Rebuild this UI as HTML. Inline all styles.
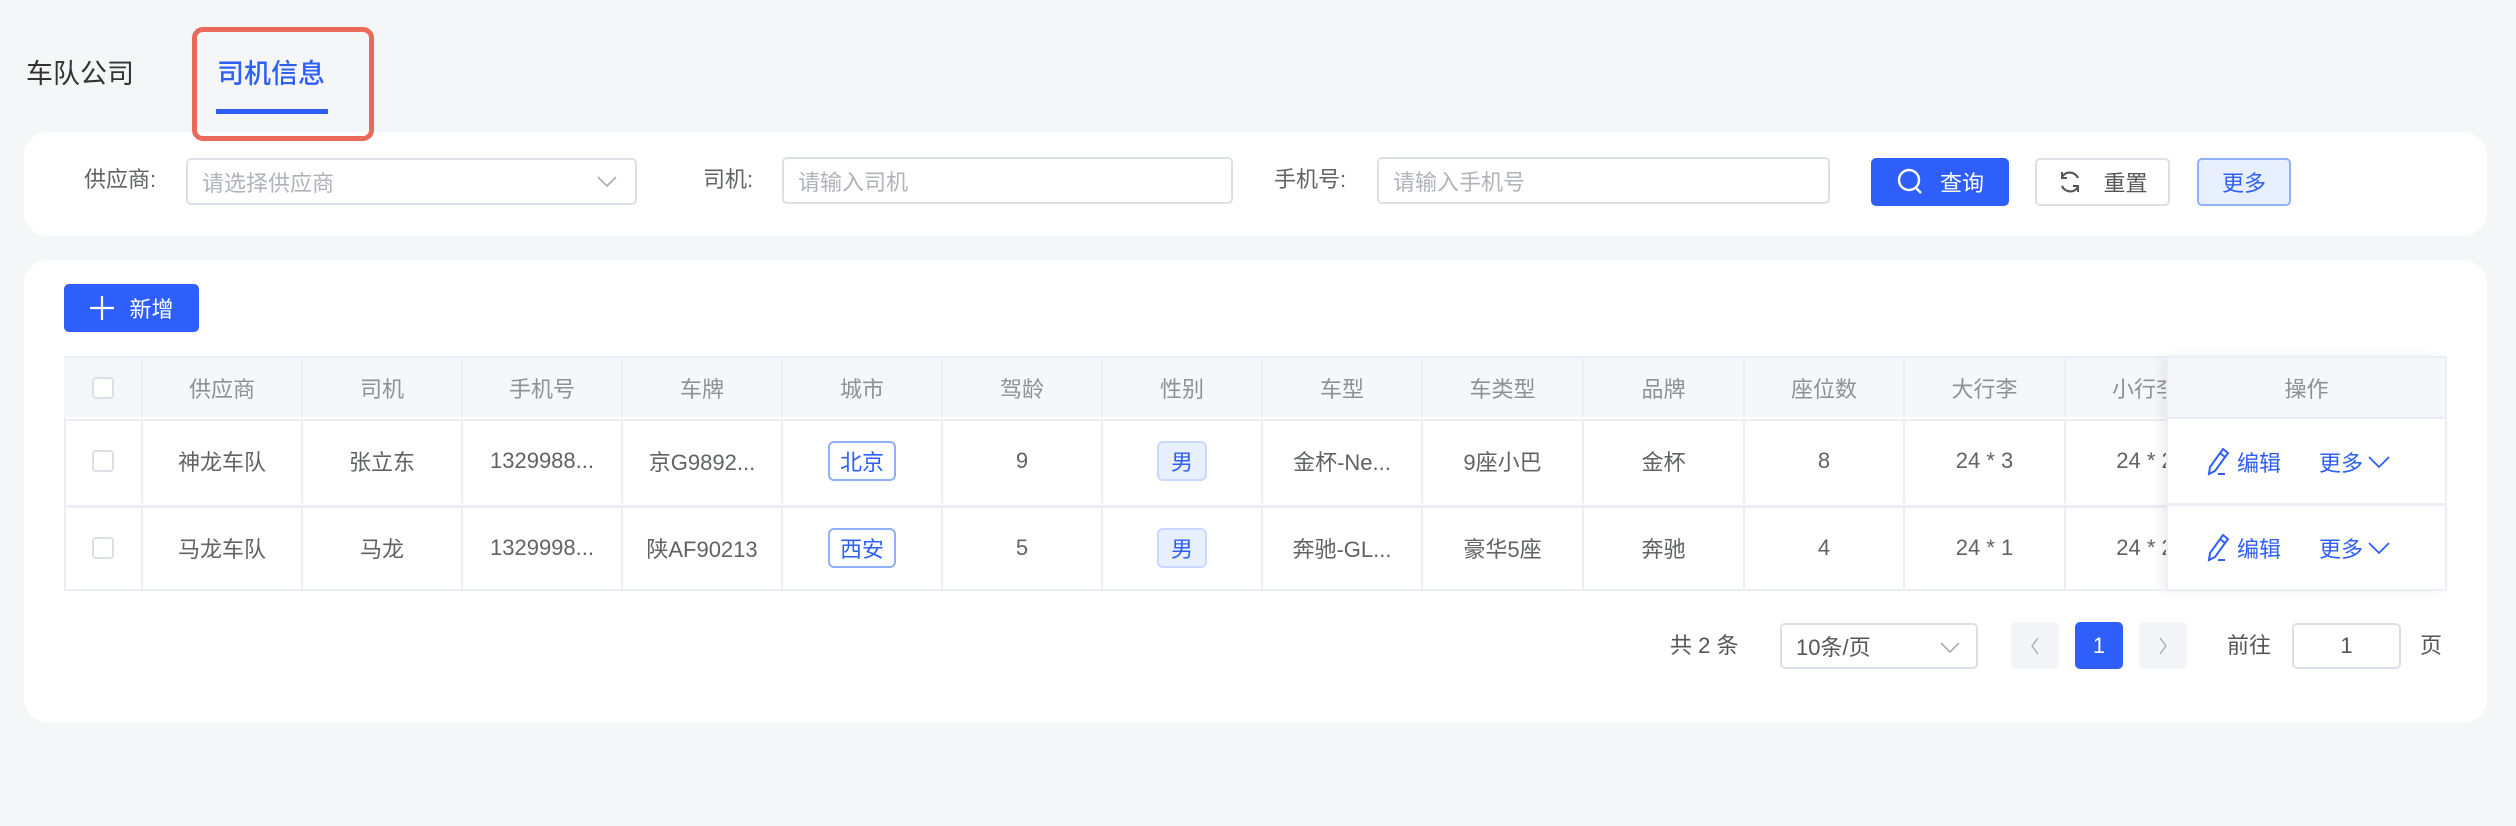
<!DOCTYPE html>
<html><head><meta charset="utf-8">
<style>
*{box-sizing:border-box;margin:0;padding:0}
body{width:2516px;height:826px;background:#f5f6f8;font-family:"Liberation Sans","Noto Sans CJK SC",sans-serif;position:relative;overflow:hidden;color:#606266}
.a{position:absolute}
.card{position:absolute;background:#fff;border-radius:24px}
.inp{position:absolute;border:2px solid #dcdfe6;border-radius:5px;background:#fff;font-size:22px;color:#b0b3b9;padding-left:14px;display:flex;align-items:center}
.lbl{position:absolute;font-size:22px;color:#606266;line-height:30px}
.btn{position:absolute;border-radius:5px;font-size:22px;display:flex;align-items:center;justify-content:center}
.cell{position:absolute;display:flex;align-items:center;justify-content:center;font-size:22px;border-right:2px solid #ebeef5;white-space:nowrap;overflow:hidden}
.hd{color:#8e9096;background:#f5f7fa}
.cb{width:22px;height:22px;border:2px solid #dcdfe6;border-radius:4px;background:#fff}
.tag{border:2px solid #8fb0fb;border-radius:6px;color:#2f5ffb;padding:0 10px;height:40px;display:flex;align-items:center;font-size:22px}
.tg2{background:#e8efff;border:2px solid #c9d8ff;border-radius:6px;color:#2f5ffb;padding:0 12px;height:40px;display:flex;align-items:center;font-size:22px}
.blue{color:#2f5ffb}
</style></head><body>
<div class="a" style="left:26px;top:58px;font-size:27px;color:#333;line-height:32px">车队公司</div>
<div class="a" style="left:217px;top:58px;font-size:27px;color:#2f5ffb;line-height:32px;font-weight:500">司机信息</div>
<div class="a" style="left:216px;top:109px;width:112px;height:5px;background:#2f5ffb"></div>

<div class="card" style="left:24px;top:132px;width:2463px;height:104px"></div>
<div class="lbl" style="left:84px;top:165px">供应商:</div>
<div class="inp" style="left:186px;top:158px;width:451px;height:47px">请选择供应商
<svg class="a" style="right:18px;top:15px" width="20" height="14" viewBox="0 0 20 14"><path d="M1 2 L10 11 L19 2" fill="none" stroke="#a8abb2" stroke-width="1.6"/></svg></div>
<div class="lbl" style="left:703px;top:165px">司机:</div>
<div class="inp" style="left:782px;top:157px;width:451px;height:47px">请输入司机</div>
<div class="lbl" style="left:1274px;top:165px">手机号:</div>
<div class="inp" style="left:1377px;top:157px;width:453px;height:47px">请输入手机号</div>
<div class="btn" style="left:1871px;top:158px;width:138px;height:48px;background:#2f5ffb;color:#fff">
<svg width="30" height="30" viewBox="0 0 30 30" style="margin-right:14px"><circle cx="13" cy="13" r="10" fill="none" stroke="#fff" stroke-width="2.4"/><path d="M20 21 L25 26" stroke="#fff" stroke-width="2.4"/></svg>查询</div>
<div class="btn" style="left:2035px;top:158px;width:135px;height:48px;border:2px solid #dcdfe6;background:#fff;color:#555">
<svg width="26" height="26" viewBox="0 0 26 26" style="margin-right:20px"><path d="M21 9 A9 9 0 0 0 5 8 M5 17 A9 9 0 0 0 21 18" fill="none" stroke="#555" stroke-width="2.2"/><path d="M5 3 V9 H10 M21 23 V17 H16" fill="none" stroke="#555" stroke-width="2"/></svg>重置</div>
<div class="btn" style="left:2197px;top:158px;width:94px;height:48px;border:2px solid #8fb0fb;background:#e8efff;color:#2f5ffb">更多</div>

<div class="card" style="left:24px;top:260px;width:2463px;height:463px"></div>
<div class="btn" style="left:64px;top:284px;width:135px;height:48px;background:#2f5ffb;color:#fff">
<svg width="26" height="26" viewBox="0 0 26 26" style="margin-right:14px"><path d="M13 1 V25 M1 13 H25" stroke="#fff" stroke-width="2.2"/></svg>新增</div>

<div class="a" style="left:64px;top:356px;width:2383px;height:235px;border:2px solid #ebeef5;border-right:none;overflow:hidden">
<div class="a" style="left:0;top:61px;width:2383px;height:2px;background:#ebeef5"></div>
<div class="a" style="left:0;top:147px;width:2383px;height:3px;background:#ebeef5"></div>
</div>
<div id="t"></div>
<script>
var cols=[64,143,303,463,623,783,943,1103,1263,1423,1584,1745,1905,2066,2226];
var hd=["","供应商","司机","手机号","车牌","城市","驾龄","性别","车型","车类型","品牌","座位数","大行李","小行李"];
var r1=["","神龙车队","张立东","1329988...","京G9892...","T北京","9","G男","金杯-Ne...","9座小巴","金杯","8","24 * 3","24 * 2"];
var r2=["","马龙车队","马龙","1329998...","陕AF90213","T西安","5","G男","奔驰-GL...","豪华5座","奔驰","4","24 * 1","24 * 2"];
var h="";
function row(d,top,ht,cls){for(var i=0;i<14;i++){var x=cols[i],w=cols[i+1]-x;var c=d[i];var inner;
if(i==0)inner='<div class="cb"></div>';else if(c[0]=="T")inner='<div class="tag">'+c.slice(1)+'</div>';else if(c[0]=="G"&&i==7)inner='<div class="tg2">'+c.slice(1)+'</div>';else inner=c;
h+='<div class="cell '+cls+'" style="left:'+x+'px;top:'+top+'px;width:'+w+'px;height:'+ht+'px">'+inner+'</div>';}}
row(hd,358,59,"hd");row(r1,419,84,"");row(r2,506,84,"");
document.getElementById("t").outerHTML=h;
</script>
<div class="a" style="left:2166px;top:356px;width:281px;height:235px;background:#fff;border-left:2px solid #ebeef5;border-right:2px solid #ebeef5;box-shadow:-6px 0 10px rgba(0,0,0,0.06)">
<div class="a hd" style="left:0;top:2px;width:277px;height:59px;display:flex;align-items:center;justify-content:center;font-size:22px">操作</div>
<div class="a" style="left:0;top:61px;width:279px;height:2px;background:#ebeef5"></div>
<div class="a" style="left:0;top:147px;width:279px;height:3px;background:#ebeef5"></div>
<div class="a" style="left:0;top:233px;width:279px;height:2px;background:#ebeef5"></div>
</div>
<div class="a" style="left:2166px;top:356px;width:281px;height:2px;background:#ebeef5"></div>
<div class="a" style="left:64px;top:589px;width:2383px;height:2px;background:#ebeef5"></div>

<div class="a blue" style="left:2207px;top:446px;font-size:22px;display:flex;align-items:center">
<svg width="26" height="30" viewBox="0 0 26 30"><path d="M16 2 L21 6 L8 24 L2 27 L3 20 Z M13 6 L18 10" fill="none" stroke="#2f5ffb" stroke-width="2"/><path d="M11 27 H18" stroke="#2f5ffb" stroke-width="2"/></svg><span style="margin-left:4px">编辑</span>
<span style="margin-left:38px">更多</span><svg width="24" height="14" viewBox="0 0 24 14" style="margin-left:4px"><path d="M2 2 L12 12 L22 2" fill="none" stroke="#2f5ffb" stroke-width="1.8"/></svg></div>
<div class="a blue" style="left:2207px;top:532px;font-size:22px;display:flex;align-items:center">
<svg width="26" height="30" viewBox="0 0 26 30"><path d="M16 2 L21 6 L8 24 L2 27 L3 20 Z M13 6 L18 10" fill="none" stroke="#2f5ffb" stroke-width="2"/><path d="M11 27 H18" stroke="#2f5ffb" stroke-width="2"/></svg><span style="margin-left:4px">编辑</span>
<span style="margin-left:38px">更多</span><svg width="24" height="14" viewBox="0 0 24 14" style="margin-left:4px"><path d="M2 2 L12 12 L22 2" fill="none" stroke="#2f5ffb" stroke-width="1.8"/></svg></div>

<div class="lbl" style="left:1670px;top:631px;color:#555">共 2 条</div>
<div class="inp" style="left:1780px;top:623px;width:198px;height:46px;color:#555">10条/页
<svg class="a" style="right:16px;top:16px" width="20" height="14" viewBox="0 0 20 14"><path d="M1 2 L10 11 L19 2" fill="none" stroke="#a8abb2" stroke-width="1.6"/></svg></div>
<div class="btn" style="left:2011px;top:622px;width:48px;height:47px;background:#f4f5f8"><svg width="12" height="20" viewBox="0 0 12 20"><path d="M9 2 L3 10 L9 18" fill="none" stroke="#b0b3b9" stroke-width="1.5"/></svg></div>
<div class="btn" style="left:2075px;top:622px;width:48px;height:47px;background:#2f5ffb;color:#fff">1</div>
<div class="btn" style="left:2139px;top:622px;width:48px;height:47px;background:#f4f5f8"><svg width="12" height="20" viewBox="0 0 12 20"><path d="M3 2 L9 10 L3 18" fill="none" stroke="#b0b3b9" stroke-width="1.5"/></svg></div>
<div class="lbl" style="left:2227px;top:631px;color:#555">前往</div>
<div class="inp" style="left:2292px;top:623px;width:109px;height:46px;color:#555;justify-content:center;padding:0">1</div>
<div class="lbl" style="left:2420px;top:631px;color:#555">页</div>

<div class="a" style="left:192px;top:27px;width:182px;height:114px;border:5px solid #e96a5a;border-radius:11px;z-index:10"></div>
</body></html>
